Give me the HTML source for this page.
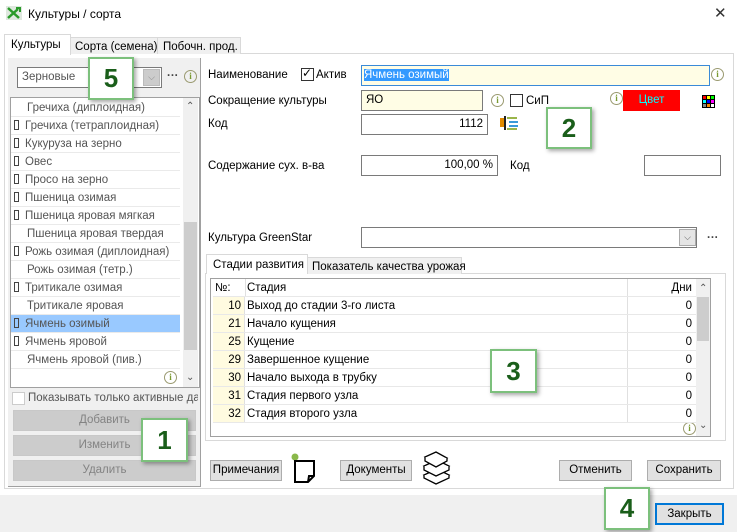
<!DOCTYPE html>
<html><head><meta charset="utf-8"><style>
*{box-sizing:border-box;margin:0;padding:0}
body{width:737px;height:532px;position:relative;overflow:hidden;background:#fff;font-family:"Liberation Sans",sans-serif;font-size:11.5px;color:#000}
.a{position:absolute}
.lbl{position:absolute;font-size:11.5px;white-space:nowrap}
.inp{position:absolute;border:1px solid #7a7a7a;background:#fff;font-size:11.5px;padding:0 4px;line-height:19px;white-space:nowrap}
.btn{position:absolute;border:1px solid #adadad;background:#e1e1e1;text-align:center;font-size:11.5px;line-height:19px}
.dbtn{position:absolute;border:1px solid #c8c8c8;background:#cccccc;color:#838383;text-align:center;font-size:11.5px;line-height:19px}
.info{position:absolute;width:13px;height:13px;border:1px solid #9a9a70;border-radius:50%;font-size:9px;line-height:11px;text-align:center;color:#7a9a30;font-family:"Liberation Serif",serif;font-weight:bold}
.num{position:absolute;background:#fff;border:2px solid #7cc07c;box-shadow:2px 2px 4px rgba(0,0,0,.35);font-size:26px;font-weight:bold;color:#1a5e1a;text-align:center}
.row{position:absolute;left:11px;width:169px;height:18px;border-bottom:1px solid #eaeaea;color:#555;line-height:19px;white-space:nowrap;font-size:11.5px}
.sq{display:inline-block;width:5px;height:10px;border:1px solid #444;margin:0 6px 0 3px;vertical-align:-1px}
.gr{position:absolute;left:213px;width:483px;height:18px;border-bottom:1px solid #e8e8e8;line-height:19px;font-size:11.5px}
.gr .n{position:absolute;left:0;width:32px;height:17px;background:#fffbe0;text-align:right;padding-right:3px;border-right:1px solid #e0e0e0}
.gr .s{position:absolute;left:34px}
.gr .d{position:absolute;left:414px;width:69px;height:17px;border-left:1px solid #e0e0e0;text-align:right;padding-right:4px}
.cb{position:absolute;width:13px;height:13px;border:1px solid #333;background:#fff}
</style></head><body>
<svg class="a" style="left:6px;top:6px" width="16" height="14" viewBox="0 0 16 14"><rect width="16" height="14" fill="#dfe8df"/><path d="M2 2 L13 12 M2 12 L12 3" stroke="#2a9a2a" stroke-width="2.5"/><path d="M10 2 L14 2 L14 6" stroke="#2a9a2a" stroke-width="2" fill="none"/></svg>
<div class="lbl" style="left:28px;top:7px;font-size:12px">Культуры / сорта</div>
<div class="lbl" style="left:714px;top:4px;font-size:15px;color:#333">✕</div>
<div class="a" style="left:4px;top:53px;width:730px;height:436px;border:1px solid #d9d9d9;background:#fff"></div>
<div class="a" style="left:70px;top:37px;width:88px;height:17px;border:1px solid #d9d9d9;border-bottom:none;background:#f0f0f0"></div>
<div class="a" style="left:157px;top:37px;width:84px;height:17px;border:1px solid #d9d9d9;border-bottom:none;background:#f0f0f0"></div>
<div class="a" style="left:4px;top:34px;width:67px;height:21px;border:1px solid #d9d9d9;border-bottom:none;background:#fff"></div>
<div class="lbl" style="left:11px;top:39px">Культуры</div>
<div class="lbl" style="left:75px;top:41px">Сорта (семена)</div>
<div class="lbl" style="left:163px;top:41px">Побочн. прод.</div>
<div class="a" style="left:8px;top:58px;width:193px;height:429px;background:#f0f0f0;border-right:1px solid #a0a0a0;border-bottom:1px solid #a0a0a0"></div>
<div class="inp" style="left:17px;top:67px;width:145px;height:21px;color:#555;line-height:19px">Зерновые</div>
<div class="a" style="left:143px;top:69px;width:17px;height:17px;background:#ccc;border:1px solid #bbb;color:#888;font-size:9px;text-align:center;line-height:15px">⌵</div>
<div class="lbl" style="left:167px;top:70px;color:#444;font-weight:bold">···</div>
<div class="info" style="left:184px;top:70px">i</div>
<div class="a" style="left:10px;top:97px;width:190px;height:291px;background:#fff;border:1px solid #a0a0a0"></div>
<div class="a" style="left:183px;top:98px;width:15px;height:289px;background:#f0f0f0"></div>
<div class="a" style="left:184px;top:222px;width:13px;height:128px;background:#cdcdcd"></div>
<div class="lbl" style="left:186px;top:101px;font-size:10px;color:#555">⌃</div>
<div class="lbl" style="left:186px;top:372px;font-size:10px;color:#555">⌄</div>
<div class="info" style="left:164px;top:371px">i</div>
<div class="row" style="top:99px"><span style="margin-left:16px">Гречиха (диплоидная)</span></div>
<div class="row" style="top:117px"><span class="sq"></span>Гречиха (тетраплоидная)</div>
<div class="row" style="top:135px"><span class="sq"></span>Кукуруза на зерно</div>
<div class="row" style="top:153px"><span class="sq"></span>Овес</div>
<div class="row" style="top:171px"><span class="sq"></span>Просо на зерно</div>
<div class="row" style="top:189px"><span class="sq"></span>Пшеница озимая</div>
<div class="row" style="top:207px"><span class="sq"></span>Пшеница яровая мягкая</div>
<div class="row" style="top:225px"><span style="margin-left:16px">Пшеница яровая твердая</span></div>
<div class="row" style="top:243px"><span class="sq"></span>Рожь озимая (диплоидная)</div>
<div class="row" style="top:261px"><span style="margin-left:16px">Рожь озимая (тетр.)</span></div>
<div class="row" style="top:279px"><span class="sq"></span>Тритикале озимая</div>
<div class="row" style="top:297px"><span style="margin-left:16px">Тритикале яровая</span></div>
<div class="row" style="top:315px;background:#99c9ff"><span class="sq"></span>Ячмень озимый</div>
<div class="row" style="top:333px"><span class="sq"></span>Ячмень яровой</div>
<div class="row" style="top:351px"><span style="margin-left:16px">Ячмень яровой (пив.)</span></div>
<div class="cb" style="left:12px;top:392px;border-color:#ccc"></div>
<div class="lbl" style="left:28px;top:392px;color:#555;width:170px;overflow:hidden">Показывать только активные да</div>
<div class="dbtn" style="left:13px;top:410px;width:183px;height:21px">Добавить</div>
<div class="dbtn" style="left:13px;top:435px;width:183px;height:21px">Изменить</div>
<div class="dbtn" style="left:13px;top:460px;width:183px;height:21px">Удалить</div>
<div class="lbl" style="left:208px;top:69px">Наименование</div>
<div class="cb" style="left:301px;top:68px"></div><div class="lbl" style="left:302px;top:66px;font-size:12px">✓</div>
<div class="lbl" style="left:316px;top:69px">Актив</div>
<div class="inp" style="left:361px;top:65px;width:349px;height:21px;background:#fffde5;border-color:#3a8ad8;padding-left:2px"><span style="background:#3399ff;color:#fff">Ячмень озимый</span></div>
<div class="info" style="left:711px;top:68px">i</div>
<div class="lbl" style="left:208px;top:95px">Сокращение культуры</div>
<div class="inp" style="left:361px;top:90px;width:122px;height:21px;background:#fffde5">ЯО</div>
<div class="info" style="left:491px;top:94px">i</div>
<div class="cb" style="left:510px;top:94px"></div>
<div class="lbl" style="left:526px;top:95px">СиП</div>
<div class="info" style="left:610px;top:92px">i</div>
<div class="a" style="left:623px;top:90px;width:57px;height:21px;background:#ff0000;color:#0ff;text-align:center;line-height:21px;font-size:11.5px">Цвет</div>
<svg class="a" style="left:702px;top:95px" width="13" height="13"><rect width="13" height="13" fill="#000"/><rect x="1" y="1" width="3" height="3" fill="#f00"/><rect x="5" y="1" width="3" height="3" fill="#ff0"/><rect x="9" y="1" width="3" height="3" fill="#0f0"/><rect x="1" y="5" width="3" height="3" fill="#0ff"/><rect x="5" y="5" width="3" height="3" fill="#00f"/><rect x="9" y="5" width="3" height="3" fill="#f0f"/><rect x="1" y="9" width="3" height="3" fill="#888"/><rect x="5" y="9" width="3" height="3" fill="#f80"/><rect x="9" y="9" width="3" height="3" fill="#fff"/></svg>
<div class="lbl" style="left:208px;top:118px">Код</div>
<div class="inp" style="left:361px;top:114px;width:127px;height:21px;text-align:right">1112</div>
<svg class="a" style="left:500px;top:115px" width="20" height="16"><rect x="0" y="3" width="4" height="9" fill="#e08a00"/><rect x="4" y="1" width="2" height="14" fill="#222"/><rect x="7" y="2" width="10" height="2" fill="#9ab54a"/><rect x="9" y="6" width="9" height="2" fill="#3a9ad8"/><rect x="9" y="10" width="9" height="2" fill="#3a9ad8"/><rect x="7" y="13" width="10" height="2" fill="#9ab54a"/></svg>
<div class="lbl" style="left:208px;top:160px">Содержание сух. в-ва</div>
<div class="inp" style="left:361px;top:155px;width:137px;height:21px;text-align:right">100,00 %</div>
<div class="lbl" style="left:510px;top:160px">Код</div>
<div class="inp" style="left:644px;top:155px;width:77px;height:21px"></div>
<div class="lbl" style="left:208px;top:232px">Культура GreenStar</div>
<div class="inp" style="left:361px;top:227px;width:336px;height:21px"></div>
<div class="a" style="left:679px;top:229px;width:17px;height:17px;background:#e5e5e5;border:1px solid #aaa;font-size:9px;text-align:center;line-height:15px;color:#555">⌵</div>
<div class="lbl" style="left:707px;top:232px;font-weight:bold;color:#444">···</div>
<div class="a" style="left:205px;top:273px;width:521px;height:168px;border:1px solid #d9d9d9"></div>
<div class="a" style="left:307px;top:257px;width:155px;height:17px;border:1px solid #d9d9d9;border-bottom:none;background:#f0f0f0"></div>
<div class="a" style="left:206px;top:254px;width:102px;height:20px;border:1px solid #d9d9d9;border-bottom:none;background:#fff"></div>
<div class="lbl" style="left:213px;top:259px">Стадии развития</div>
<div class="lbl" style="left:312px;top:261px">Показатель качества урожая</div>
<div class="a" style="left:210px;top:278px;width:501px;height:159px;border:1px solid #a0a0a0;background:#fff"></div>
<div class="a" style="left:696px;top:279px;width:14px;height:157px;background:#f0f0f0"></div>
<div class="a" style="left:697px;top:297px;width:12px;height:44px;background:#cdcdcd"></div>
<div class="lbl" style="left:699px;top:283px;font-size:10px;color:#555">⌃</div>
<div class="lbl" style="left:699px;top:420px;font-size:10px;color:#555">⌄</div>
<div class="info" style="left:683px;top:422px">i</div>
<div class="gr" style="top:279px"><span class="s" style="left:2px">№:</span><span class="a" style="left:32px;height:17px;border-left:1px solid #e0e0e0"></span><span class="s">Стадия</span><span class="d">Дни</span></div>
<div class="gr" style="top:297px"><span class="n">10</span><span class="s">Выход до стадии 3-го листа</span><span class="d">0</span></div>
<div class="gr" style="top:315px"><span class="n">21</span><span class="s">Начало кущения</span><span class="d">0</span></div>
<div class="gr" style="top:333px"><span class="n">25</span><span class="s">Кущение</span><span class="d">0</span></div>
<div class="gr" style="top:351px"><span class="n">29</span><span class="s">Завершенное кущение</span><span class="d">0</span></div>
<div class="gr" style="top:369px"><span class="n">30</span><span class="s">Начало выхода в трубку</span><span class="d">0</span></div>
<div class="gr" style="top:387px"><span class="n">31</span><span class="s">Стадия первого узла</span><span class="d">0</span></div>
<div class="gr" style="top:405px"><span class="n">32</span><span class="s">Стадия второго узла</span><span class="d">0</span></div>
<div class="btn" style="left:210px;top:460px;width:72px;height:21px">Примечания</div>
<svg class="a" style="left:290px;top:452px" width="28" height="32"><circle cx="5" cy="5" r="3.5" fill="#8ab84a"/><path d="M5 9 H24 V24 L18 30 H5 Z M18 30 L19 24 H24" fill="#fff" stroke="#000" stroke-width="2"/></svg>
<div class="btn" style="left:340px;top:460px;width:72px;height:21px">Документы</div>
<svg class="a" style="left:421px;top:451px" width="30" height="34"><g fill="#fff" stroke="#000" stroke-width="1.3"><path d="M3 24 L16 18 L28 24 L15 31 Z"/><path d="M3 24 V27 L15 33 L28 27 V24"/><path d="M3 15 L16 9 L28 15 L15 22 Z"/><path d="M3 15 V19 L15 25 L28 19 V15"/><path d="M4 6 L15 1 L26 7 L15 13 Z"/><path d="M4 6 V10 L15 16 L26 10 V7"/></g></svg>
<div class="btn" style="left:559px;top:460px;width:73px;height:21px">Отменить</div>
<div class="btn" style="left:647px;top:460px;width:74px;height:21px">Сохранить</div>
<div class="a" style="left:0;top:495px;width:737px;height:37px;background:#f0f0f0"></div>
<div class="btn" style="left:655px;top:503px;width:69px;height:22px;border:2px solid #0078d7;line-height:18px">Закрыть</div>
<div class="num" style="left:88px;top:57px;width:46px;height:43px;line-height:39px">5</div>
<div class="num" style="left:546px;top:107px;width:46px;height:42px;line-height:38px">2</div>
<div class="num" style="left:490px;top:349px;width:47px;height:44px;line-height:40px">3</div>
<div class="num" style="left:141px;top:418px;width:47px;height:44px;line-height:40px">1</div>
<div class="num" style="left:604px;top:487px;width:46px;height:43px;line-height:39px">4</div>
</body></html>
